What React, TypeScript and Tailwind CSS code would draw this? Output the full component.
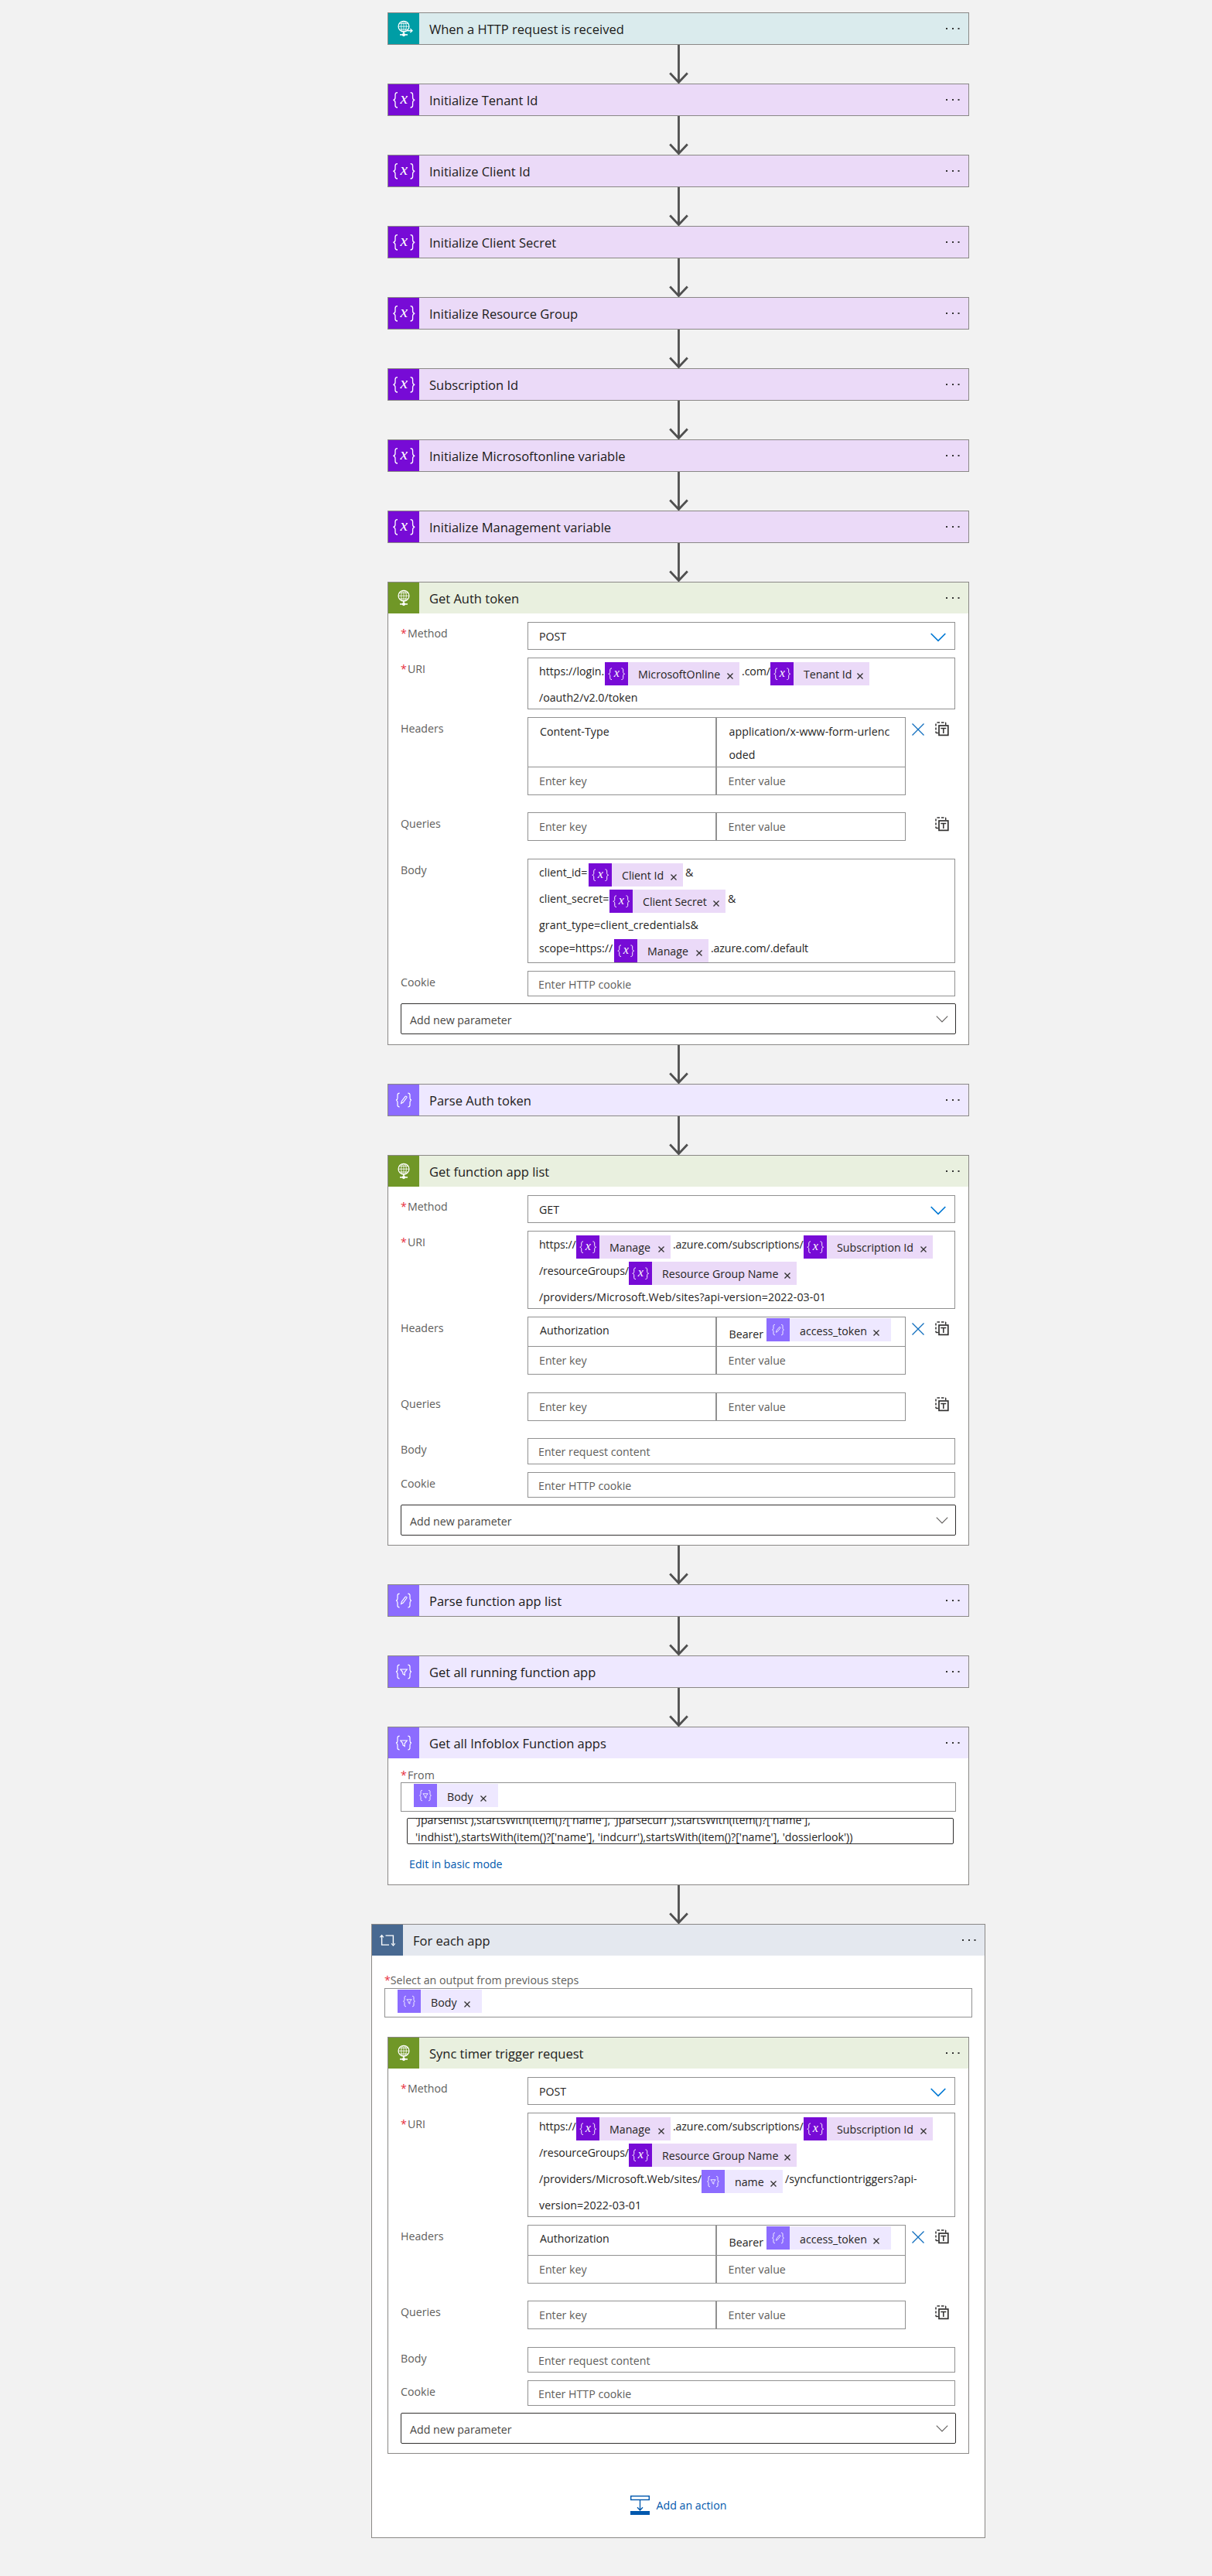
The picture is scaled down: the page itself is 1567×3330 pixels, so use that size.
import React from "react";

type IconKind = "request" | "http" | "variable" | "parse" | "filter" | "loop";

const tileColor: Record<IconKind, string> = {
  request: "bg-[#009da5]",
  http: "bg-[#709727]",
  variable: "bg-[#770bd6]",
  parse: "bg-[#8c6cff]",
  filter: "bg-[#8c6cff]",
  loop: "bg-[#486991]",
};

const headColor: Record<IconKind, string> = {
  request: "bg-[#daebed]",
  http: "bg-[#e9f0df]",
  variable: "bg-[#ebdaf8]",
  parse: "bg-[#eee8ff]",
  filter: "bg-[#eee8ff]",
  loop: "bg-[#e4e8ef]",
};

function Globe({ arrow }: { arrow?: boolean }) {
  return (
    <>
      <circle cx="20" cy="17.2" r="6.9" strokeWidth="1.3" />
      <ellipse cx="20" cy="17.2" rx="3.3" ry="6.9" strokeWidth="0.9" />
      <path d="M13.2 17.2h13.6M14.4 13.4h11.2M14.4 21h11.2M20 10.3v13.8" strokeWidth="0.8" />
      <path d="M20 24v3" strokeWidth="1.6" />
      <path d="M15 27.9h10" strokeWidth="1.6" />
      <path d="M18 26.4h4v2.6l-2 1.2-2-1.2z" fill="white" stroke="none" />
      {arrow && (
        <>
          <path d="M24.5 22.7h6" strokeWidth="1.4" />
          <path d="M28.4 20.3l2.6 2.4-2.6 2.4" strokeWidth="1.3" />
        </>
      )}
    </>
  );
}

function SmallBraces() {
  return (
    <path
      d="M14.6 11.2c-2 0-2.6.8-2.6 2.4v3.6c0 1.7-.6 2.6-1.9 2.9 1.3.3 1.9 1.2 1.9 2.9v3.6c0 1.6.6 2.4 2.6 2.4M25.4 11.2c2 0 2.6.8 2.6 2.4v3.6c0 1.7.6 2.6 1.9 2.9-1.3.3-1.9 1.2-1.9 2.9v3.6c0 1.6-.6 2.4-2.6 2.4"
      strokeWidth="1.2"
    />
  );
}

function Tile({ kind, className }: { kind: IconKind; className: string }) {
  return (
    <div className={`shrink-0 ${className} ${tileColor[kind]}`}>
      <svg viewBox="0 0 40 40" className="block size-full" fill="none" stroke="white">
        {kind === "request" && <Globe arrow />}
        {kind === "http" && <Globe />}
        {kind === "variable" && (
          <>
            <path
              d="M12 10.6c-2.2 0-3 1-3 2.8v3.6c0 2-.8 3-2.6 3.3 1.8.3 2.6 1.3 2.6 3.3v3.6c0 1.8.8 2.8 3 2.8M28.6 10.6c2.2 0 3 1 3 2.8v3.6c0 2 .8 3 2.6 3.3-1.8.3-2.6 1.3-2.6 3.3v3.6c0 1.8-.8 2.8-3 2.8"
              strokeWidth="1.3"
            />
            <text
              x="20.3"
              y="25"
              textAnchor="middle"
              fill="white"
              stroke="none"
              fontSize="21.5"
              fontStyle="italic"
              fontFamily="Liberation Serif, serif"
            >
              x
            </text>
          </>
        )}
        {kind === "parse" && (
          <>
            <SmallBraces />
            <path d="M16.6 24.4l.7-3 4.7-6c.8-.9 2.6.3 1.9 1.4l-4.7 6.2z" strokeWidth="1.1" />
          </>
        )}
        {kind === "filter" && (
          <>
            <SmallBraces />
            <path d="M15.8 17h8.4l-3 3.8v3.6l-2.4-1.6v-2z" strokeWidth="1.1" />
          </>
        )}
        {kind === "loop" && (
          <>
            <path d="M12.6 14.5v11.6h9.4M17.5 14.1h9.9v11.4" strokeWidth="1.4" />
            <path d="M10.3 16.4l2.3-2.8 2.3 2.8M25.1 24.3l2.3 2.8 2.3-2.8" strokeWidth="1.2" />
          </>
        )}
      </svg>
    </div>
  );
}

function Header({ kind, title }: { kind: IconKind; title: string }) {
  return (
    <div className={`flex h-10 shrink-0 items-center pr-[10px] ${headColor[kind]}`}>
      <Tile kind={kind} className="size-10" />
      <div className="grow pt-px pl-[13px] text-[16.5px] leading-[39px] whitespace-nowrap text-[#1b1a19]">{title}</div>
      <svg viewBox="0 0 20 4" className="h-1 w-5" fill="#333">
        <rect x="1" y="1" width="2" height="2" />
        <rect x="9" y="1" width="2" height="2" />
        <rect x="16.5" y="1" width="2" height="2" />
      </svg>
    </div>
  );
}

function Arrow() {
  return (
    <svg viewBox="0 0 26 50" className="block h-[50px] w-[26px] shrink-0" fill="none" stroke="#505050">
      <path d="M13.5 0v48" strokeWidth="2.8" />
      <path d="M2.2 36.5l11.3 12 11.3-12" strokeWidth="2.8" />
    </svg>
  );
}

function Card({
  kind,
  title,
  className = "h-[42px]",
  children,
}: {
  kind: IconKind;
  title: string;
  className?: string;
  children?: React.ReactNode;
}) {
  return (
    <div className={`w-[752px] shrink-0 border border-[#8a8886] bg-white ${className}`}>
      <Header kind={kind} title={title} />
      {children}
    </div>
  );
}

function Label({ text, required }: { text: string; required?: boolean }) {
  return (
    <div className="flex w-[164px] shrink-0 leading-[30px] text-[#605e5c]">
      {required && <span className="w-[9px] text-[#e8303f]">*</span>}
      <span className="whitespace-nowrap">{text}</span>
    </div>
  );
}

function Row({
  label,
  required,
  className,
  children,
}: {
  label: string;
  required?: boolean;
  className: string;
  children: React.ReactNode;
}) {
  return (
    <div className={`flex pl-4 ${className}`}>
      <Label text={label} required={required} />
      {children}
    </div>
  );
}

function Cross({ className }: { className: string }) {
  return (
    <svg viewBox="0 0 8 8" className={className} fill="none" stroke="#323130" strokeWidth="1.3">
      <path d="M.5.5l7 7M7.5.5l-7 7" />
    </svg>
  );
}

/* Dynamic-content chip shown inside a text run. */
function Token({ kind, text, className }: { kind: IconKind; text: string; className: string }) {
  return (
    <span className={`flex h-[30px] shrink-0 pr-2 ${headColor[kind]} ${className}`}>
      <Tile kind={kind} className="size-[30px]" />
      <span className="grow pt-px pl-[13px] leading-[29px] whitespace-nowrap">{text}</span>
      <Cross className="mt-[14px] size-2 shrink-0" />
    </span>
  );
}

/* Chip variant used when it sits directly in a field. */
function FieldToken({ kind, text, className }: { kind: IconKind; text: string; className: string }) {
  return (
    <span className={`flex h-[30px] shrink-0 pr-[15px] ${headColor[kind]} ${className}`}>
      <Tile kind={kind} className="size-[30px]" />
      <span className="grow pt-0.5 pl-[13px] leading-[29px] whitespace-nowrap">{text}</span>
      <Cross className="mt-[15px] size-2 shrink-0" />
    </span>
  );
}

function Txt({ children, className = "" }: { children: string; className?: string }) {
  return <span className={`shrink-0 leading-[23px] whitespace-nowrap ${className}`}>{children}</span>;
}

const fieldBorder = "border border-[#919191] bg-white";

function RichBox({ className, children }: { className: string; children: React.ReactNode }) {
  return <div className={`w-[553px] overflow-hidden pt-[5px] pl-[14px] ${fieldBorder} ${className}`}>{children}</div>;
}

function Line({ className = "h-[34px]", children }: { className?: string; children: React.ReactNode }) {
  return <div className={`flex items-start ${className}`}>{children}</div>;
}

function Method({ value }: { value: string }) {
  return (
    <Row label="Method" required className="mt-[11px]">
      <div className={`flex h-9 w-[553px] items-center justify-between pr-[11px] pl-[14px] ${fieldBorder}`}>
        <span className="pt-px">{value}</span>
        <svg viewBox="0 0 20 12" className="mt-[3px] h-3 w-5" fill="none" stroke="#0078d4" strokeWidth="1.7">
          <path d="M.7 1l9.3 9.4L19.3 1" />
        </svg>
      </div>
    </Row>
  );
}

function TextModeIcon() {
  return (
    <svg viewBox="0 0 18 19" className="mt-[6px] h-[19px] w-[18px] -translate-x-px" fill="none" stroke="#323130">
      <path d="M2.5 1h11.500" strokeWidth="1.5" strokeDasharray="3.5 2" />
      <path d="M13.7 1v3" strokeWidth="1.4" />
      <path d="M1 2.500v12" strokeWidth="1.5" strokeDasharray="3 2" />
      <path d="M1 14.5h3" strokeWidth="1.4" />
      <rect x="5" y="5" width="11.8" height="12.4" strokeWidth="1.7" />
      <path d="M7.3 8.6h7M10.8 8.6v6.500" strokeWidth="1.5" />
    </svg>
  );
}

function Pairs({ children, removable }: { children?: React.ReactNode; removable?: boolean }) {
  return (
    <>
      <div className="flex w-[489px] flex-col">
        {children}
        <div className="flex h-[37px] text-[#605e5c]">
          <div className={`w-[244px] pl-[14px] leading-[35px] ${fieldBorder}`}>Enter key</div>
          <div className={`w-[245px] pl-[14.5px] leading-[35px] ${fieldBorder}`}>Enter value</div>
        </div>
      </div>
      <div className="flex w-[39px] justify-start pl-2">
        {removable && (
          <svg viewBox="0 0 16 16" className="mt-2 size-4" fill="none" stroke="#106ebe" strokeWidth="1.3">
            <path d="M.5.5l15 15M15.5.5l-15 15" />
          </svg>
        )}
      </div>
      <TextModeIcon />
    </>
  );
}

const pairCell = "border border-b-0 border-[#919191]";

function AuthHeaders({ className }: { className: string }) {
  return (
    <Row label="Headers" className="mt-[10px]">
      <Pairs removable>
        <div className={`flex ${className}`}>
          <div className={`w-[244px] pt-px pl-[15px] leading-[32px] ${pairCell}`}>Authorization</div>
          <div className={`flex w-[245px] pt-px pl-[15.5px] ${pairCell}`}>
            <span className="w-[48.5px] pt-[10px] leading-[22px]">Bearer</span>
            <FieldToken kind="parse" text="access_token" className="w-[161px]" />
          </div>
        </div>
      </Pairs>
    </Row>
  );
}

function Placeholder({ text, className }: { text: string; className: string }) {
  return (
    <div className={`flex w-[553px] items-center pt-0.5 pl-[13px] text-[#605e5c] ${fieldBorder} ${className}`}>{text}</div>
  );
}

function AddParameter({ className }: { className: string }) {
  return (
    <div
      className={`ml-4 flex h-10 w-[718px] items-center justify-between rounded-[2px] border border-[#323130] pr-[9px] pl-[11px] text-[#484644] ${className}`}
    >
      <span className="pt-[3px]">Add new parameter</span>
      <svg viewBox="0 0 16 9" className="h-[9px] w-4" fill="none" stroke="#605e5c" strokeWidth="1.1">
        <path d="M.8.7L8 8 15.2.7" />
      </svg>
    </div>
  );
}

function SiteLines() {
  return (
    <>
      <Line>
        <Txt className="w-12 tracking-[-0.1px]">https://</Txt>
        <Token kind="variable" text="Manage" className="w-[122px]" />
        <Txt className="w-[172px] pl-[3px] tracking-[-0.13px]">.azure.com/subscriptions/</Txt>
        <Token kind="variable" text="Subscription Id" className="w-[167px]" />
      </Line>
      <Line>
        <Txt className="w-[116px] tracking-[-0.1px]">/resourceGroups/</Txt>
        <Token kind="variable" text="Resource Group Name" className="w-[217px]" />
      </Line>
    </>
  );
}

const initSteps = [
  "Initialize Tenant Id",
  "Initialize Client Id",
  "Initialize Client Secret",
  "Initialize Resource Group",
  "Subscription Id",
  "Initialize Microsoftonline variable",
  "Initialize Management variable",
];

export default function App() {
  return (
    <div className="h-[3330px] w-[1567px] bg-[#f2f2f2] pt-4 font-['Open_Sans','Noto_Sans',sans-serif] text-[14.2px] leading-[20px] text-[#252423]">
      <div className="ml-[480px] flex w-[794px] flex-col items-center">
        <Card kind="request" title="When a HTTP request is received" />
        {initSteps.map((title) => (
          <React.Fragment key={title}>
            <Arrow />
            <Card kind="variable" title={title} />
          </React.Fragment>
        ))}
        <Arrow />

        <Card kind="http" title="Get Auth token" className="h-[599px]">
          <Method value="POST" />
          <Row label="URI" required className="mt-[10px]">
            <RichBox className="h-[67px]">
              <Line>
                <Txt className="w-[85px]">https://login.</Txt>
                <Token kind="variable" text="MicrosoftOnline" className="w-[174px]" />
                <Txt className="w-10 pl-[3px] tracking-[-0.1px]">.com/</Txt>
                <Token kind="variable" text="Tenant Id" className="w-[128px]" />
              </Line>
              <Line>
                <Txt>/oauth2/v2.0/token</Txt>
              </Line>
            </RichBox>
          </Row>
          <Row label="Headers" className="mt-[10px]">
            <Pairs removable>
              <div className="flex h-16 leading-[30px]">
                <div className={`w-[244px] pt-[3px] pl-[15px] tracking-[0.06px] ${pairCell}`}>Content-Type</div>
                <div className={`w-[245px] pt-[3px] pr-[16px] pl-[15.5px] tracking-[0.06px] break-all ${pairCell}`}>
                  application/x-www-form-urlencoded
                </div>
              </div>
            </Pairs>
          </Row>
          <Row label="Queries" className="mt-[22px]">
            <Pairs />
          </Row>
          <Row label="Body" className="mt-[23px]">
            <RichBox className="h-[135px]">
              <Line>
                <Txt className="w-16">client_id=</Txt>
                <Token kind="variable" text="Client Id" className="w-[122px]" />
                <Txt className="pl-[3px]">&amp;</Txt>
              </Line>
              <Line>
                <Txt className="w-[91px]">client_secret=</Txt>
                <Token kind="variable" text="Client Secret" className="w-[150px]" />
                <Txt className="pl-[3px]">&amp;</Txt>
              </Line>
              <Line className="h-[30px]">
                <Txt className="tracking-[0.09px]">grant_type=client_credentials&amp;</Txt>
              </Line>
              <Line>
                <Txt className="w-[97px]">scope=https://</Txt>
                <Token kind="variable" text="Manage" className="w-[122px]" />
                <Txt className="pl-[3px] tracking-[-0.13px]">.azure.com/.default</Txt>
              </Line>
            </RichBox>
          </Row>
          <Row label="Cookie" className="mt-[10px]">
            <Placeholder text="Enter HTTP cookie" className="h-[33px]" />
          </Row>
          <AddParameter className="mt-[9px]" />
        </Card>
        <Arrow />

        <Card kind="parse" title="Parse Auth token" />
        <Arrow />

        <Card kind="http" title="Get function app list" className="h-[505px]">
          <Method value="GET" />
          <Row label="URI" required className="mt-[10px]">
            <RichBox className="h-[101px]">
              <SiteLines />
              <Line>
                <Txt className="tracking-[0.09px]">/providers/Microsoft.Web/sites?api-version=2022-03-01</Txt>
              </Line>
            </RichBox>
          </Row>
          <AuthHeaders className="h-[38px]" />
          <Row label="Queries" className="mt-[23px]">
            <Pairs />
          </Row>
          <Row label="Body" className="mt-[22px]">
            <Placeholder text="Enter request content" className="h-[34px]" />
          </Row>
          <Row label="Cookie" className="mt-[10px]">
            <Placeholder text="Enter HTTP cookie" className="h-[33px]" />
          </Row>
          <AddParameter className="mt-[9px]" />
        </Card>
        <Arrow />

        <Card kind="parse" title="Parse function app list" />
        <Arrow />
        <Card kind="filter" title="Get all running function app" />
        <Arrow />

        <Card kind="filter" title="Get all Infoblox Function apps" className="h-[205px]">
          <div className="flex h-[31px] pt-[7px] pl-4">
            <Label text="From" required />
          </div>
          <div className={`ml-4 h-[38px] w-[718px] pt-px pl-4 ${fieldBorder}`}>
            <FieldToken kind="filter" text="Body" className="w-[109px]" />
          </div>
          <div className="mt-2 ml-6 flex h-[34px] w-[707px] flex-col justify-end overflow-hidden rounded-[2px] border border-[#323130] pl-[10px] leading-[21px] whitespace-nowrap">
            <div className="h-[22px] shrink-0">
              {"'Jparsehist'),startsWith(item()?['name'], 'Jparsecurr'),startsWith(item()?['name'],"}
            </div>
            <div className="h-[19px] shrink-0">
              {"'indhist'),startsWith(item()?['name'], 'indcurr'),startsWith(item()?['name'], 'dossierlook'))"}
            </div>
          </div>
          <div className="mt-4 ml-[27px] text-[#0058ad]">Edit in basic mode</div>
        </Card>
        <Arrow />

        <div className="flex h-[794px] w-[794px] flex-col border border-[#8a8886] bg-white">
          <Header kind="loop" title="For each app" />
          <div className="mt-[17px] flex h-[25px] pl-4">
            <Label text="Select an output from previous steps" required />
          </div>
          <div className={`ml-4 h-[38px] w-[760px] shrink-0 pt-px pl-4 ${fieldBorder}`}>
            <FieldToken kind="filter" text="Body" className="w-[109px]" />
          </div>
          <div className="mt-[25px] ml-5">
            <Card kind="http" title="Sync timer trigger request" className="h-[539px]">
              <Method value="POST" />
              <Row label="URI" required className="mt-[10px]">
                <RichBox className="h-[135px]">
                  <SiteLines />
                  <Line>
                    <Txt className="w-[210px]">/providers/Microsoft.Web/sites/</Txt>
                    <Token kind="filter" text="name" className="w-[105px]" />
                    <Txt className="pl-[3px]">/syncfunctiontriggers?api-</Txt>
                  </Line>
                  <Line>
                    <Txt className="tracking-[0.09px]">version=2022-03-01</Txt>
                  </Line>
                </RichBox>
              </Row>
              <AuthHeaders className="h-[39px]" />
              <Row label="Queries" className="mt-[22px]">
                <Pairs />
              </Row>
              <Row label="Body" className="mt-[23px]">
                <Placeholder text="Enter request content" className="h-[33px]" />
              </Row>
              <Row label="Cookie" className="mt-[10px]">
                <Placeholder text="Enter HTTP cookie" className="h-[33px]" />
              </Row>
              <AddParameter className="mt-[9px]" />
            </Card>
          </div>
          <div className="mt-[54px] flex items-center justify-center gap-[9px] text-[#0058ad]">
            <svg viewBox="0 0 25 25" className="size-[25px]" fill="none" stroke="#0058ad">
              <rect x=".7" y=".7" width="23.6" height="4.8" strokeWidth="1.4" />
              <path d="M12.5 6v13M9 15.3l3.5 3.7 3.5-3.7" strokeWidth="1.3" />
              <rect x="0" y="20" width="25" height="5" fill="#0058ad" stroke="none" />
            </svg>
            <span>Add an action</span>
          </div>
        </div>
      </div>
    </div>
  );
}
